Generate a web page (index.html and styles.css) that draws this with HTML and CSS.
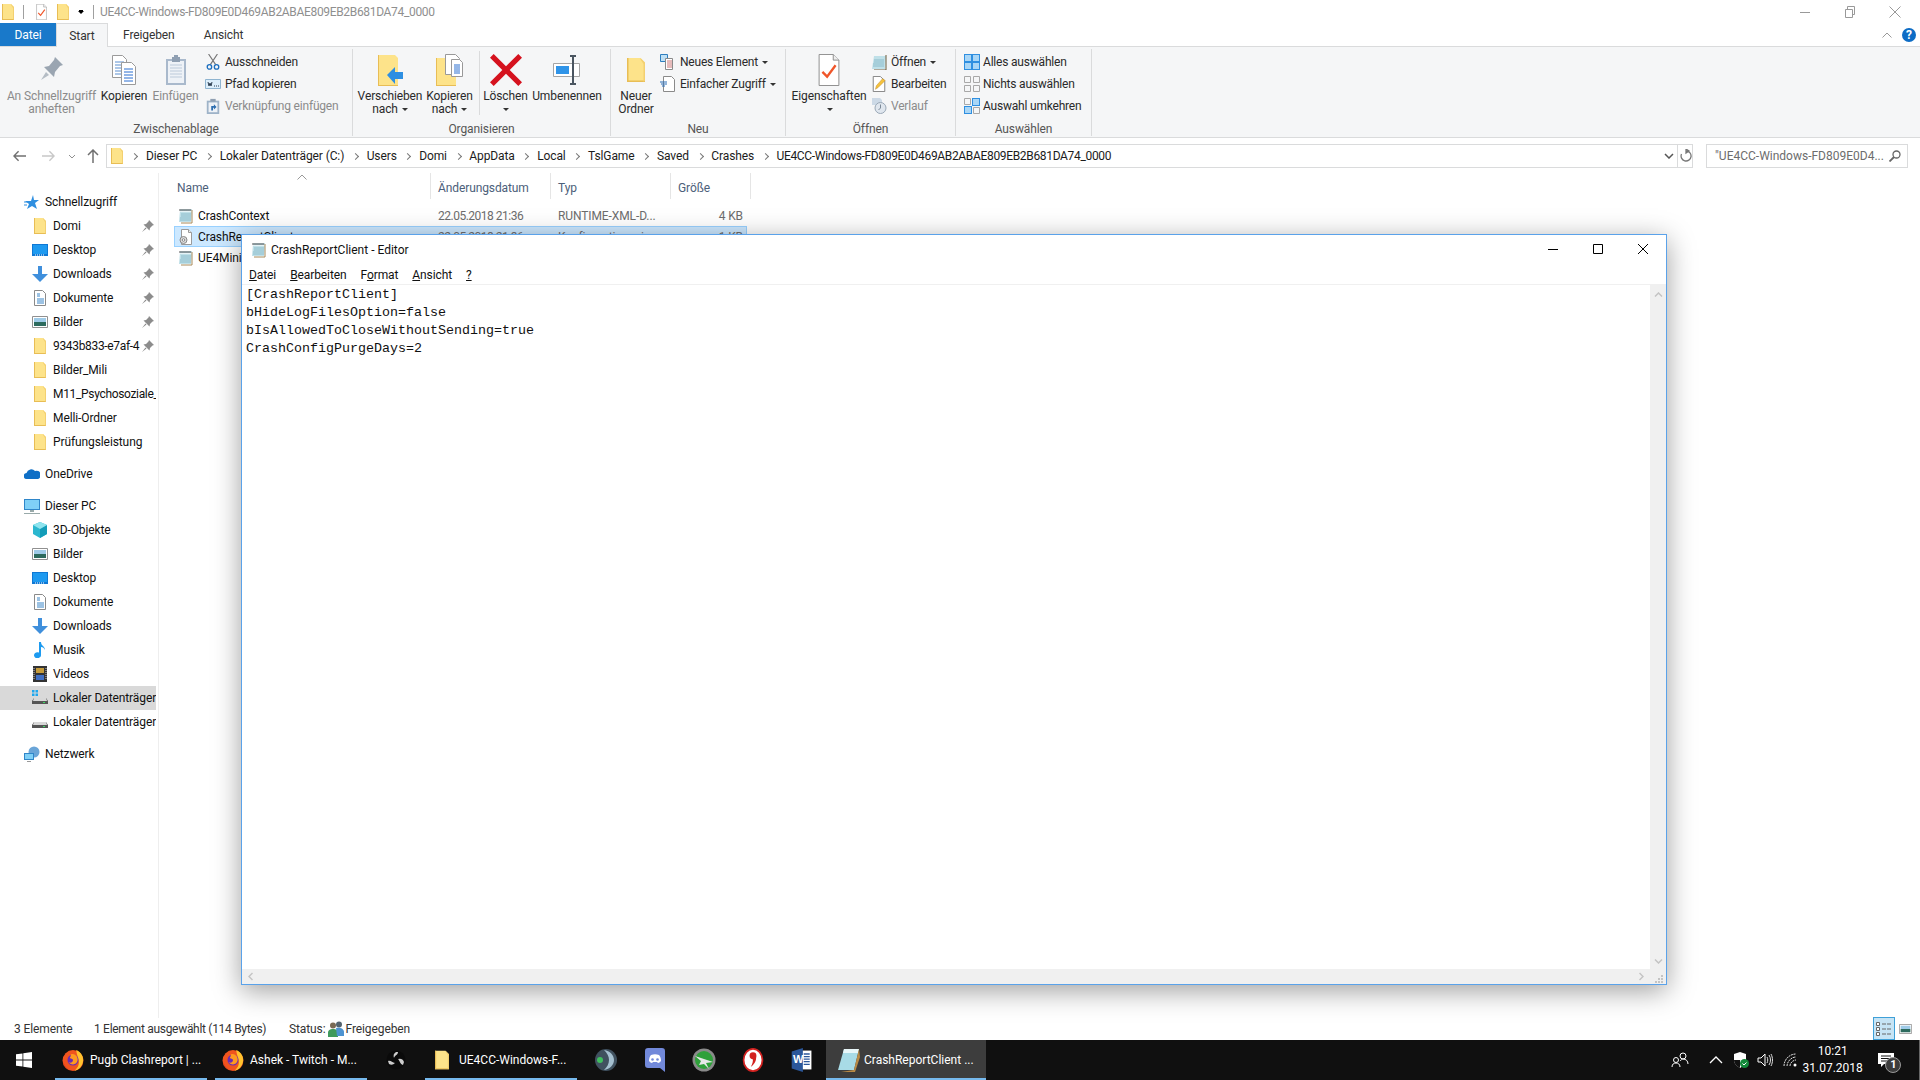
FILE: index.html
```html
<!DOCTYPE html>
<html lang="de">
<head>
<meta charset="UTF-8"/>
<title>CrashReportClient - Editor</title>
<link rel="stylesheet" href="styles.css">
</head>
<body>
<svg class="defs" aria-hidden="true">
	<symbol id="folder" viewBox="0 0 12 16"><path d="M0 0h9l3 3v13H0z" fill="#fde38a"/><path d="M0 0h1v15h11v1H0z" fill="#e8bd55"/><path d="M9 0l3 3v12l-1 1V4L9 1z" fill="#f3d070"/></symbol>
	<symbol id="note" viewBox="0 0 16 16"><path d="M2 2h12l-1 12H1z" fill="#bfe0e8"/><path d="M2 2h12v2H2z" fill="#e6f3f6"/><path d="M2 2h12M3 6h10M3 8h10M2 10h11M2 12h11" stroke="#8cbccb"/><path d="M14 2v13H3" fill="none" stroke="#a88a5a"/><path d="M2 1v2M4 1v2M6 1v2M8 1v2M10 1v2M12 1v2" stroke="#555"/></symbol>
	<symbol id="cfg" viewBox="0 0 16 16"><path d="M3.500.5h7l3 3v12h-10z" fill="#fff" stroke="#9a9a9a"/><path d="M10.500.5v3h3" fill="#eee" stroke="#9a9a9a"/><circle cx="5.500" cy="11" r="3.500" fill="#ddd" stroke="#888"/><circle cx="5.500" cy="11" r="1.300" fill="#fff" stroke="#888"/></symbol>
	<symbol id="pin" viewBox="0 0 12 12"><path d="M7 0l5 5-1.500.5L8 8l-.5 2.500L1.500 4.500 4 4l2.500-2.500zM3.500 7.500L0 12l4.500-3.500z" fill="#8c8c8c"/></symbol>
	<symbol id="star" viewBox="0 0 16 16"><path d="M9 1l1 5h5l-4 3 2 6-5-3-5 3 2-5-4-3h6z" fill="#2f8fe0"/><path d="M0 8h4M0 11h3" stroke="#2f8fe0"/></symbol>
	<symbol id="desk" viewBox="0 0 16 16"><path d="M0 2h16v12H0z" fill="#0f78d4"/><path d="M1 3h14v9H1z" fill="#1e9af0"/><path d="M3 13h10" stroke="#fff" stroke-dasharray="1 1"/></symbol>
	<symbol id="down" viewBox="0 0 16 16"><path d="M6 0h4v8h6l-8 8-8-8h6z" fill="#3f8fdc"/></symbol>
	<symbol id="docs" viewBox="0 0 16 16"><path d="M2.500.5h8l3 3v12h-11z" fill="#fff" stroke="#8a8a8a"/><path d="M5 4h3M5 6h3M5 9h7M5 11h7M5 13h7" stroke="#3a86c8"/></symbol>
	<symbol id="pics" viewBox="0 0 16 16"><path d="M.5 2.500h15v11H.5z" fill="#fff" stroke="#909090"/><path d="M2 4h12v4H2z" fill="#9fcbe8"/><path d="M2 8h12v4H2z" fill="#2d6b5e"/></symbol>
	<symbol id="cloud" viewBox="0 0 16 16"><path d="M3 13a3 3 0 0 1-.5-6A5 5 0 0 1 11 5a3.500 3.500 0 0 1 3 8z" fill="#0f6fc6"/></symbol>
	<symbol id="pc" viewBox="0 0 16 16"><path d="M0 1h16v11H0z" fill="#2f86c9"/><path d="M1 2h14v9H1z" fill="#7fd0f7"/><path d="M6 12h4v2H6zM0 15h16v1H0z" fill="#9aa"/></symbol>
	<symbol id="cube" viewBox="0 0 16 16"><path d="M8 0l7 3v9l-7 4-7-4V3z" fill="#2bb7cf"/><path d="M8 7l7-4v9l-7 4z" fill="#129cb8"/><path d="M8 0l7 3-7 4-7-4z" fill="#8fe4ee"/></symbol>
	<symbol id="music" viewBox="0 0 16 16"><path d="M7 0h2c0 4 4 4 4 8-1-2-2-3-4-3v8a3.500 3 0 1 1-2-2.500z" fill="#1d9bf0"/></symbol>
	<symbol id="film" viewBox="0 0 16 16"><path d="M1 0h14v16H1z" fill="#333"/><path d="M4 2h8v5H4z" fill="#c59b3a"/><path d="M4 9h8v5H4z" fill="#3f6fc4"/><path d="M2 2v12M14 2v12" stroke="#ccc" stroke-dasharray="1 1"/></symbol>
	<symbol id="drive" viewBox="0 0 16 16"><path d="M2 8h12l2 3v3H0v-3z" fill="#555"/><path d="M2 8h12l1 3H1z" fill="#d8d8d8"/><path d="M11 12h2v1h-2z" fill="#3ddc63"/></symbol>
	<symbol id="drivewin" viewBox="0 0 16 16"><use href="#drive"/><path d="M0 0h2.500v2.500H0zM3.500 0H6v2.500H3.500zM0 3.500h2.500V6H0zM3.500 3.500H6V6H3.500z" fill="#1ea7ef"/></symbol>
	<symbol id="net" viewBox="0 0 16 16"><circle cx="10" cy="6" r="5.500" fill="#6aa5d8"/><path d="M0 7h10v7H0z" fill="#2f86c9"/><path d="M1 8h8v5H1z" fill="#7fd0f7"/><path d="M3 15h4v1H3z" fill="#999"/></symbol>
	<symbol id="shared" viewBox="0 0 16 16"><circle cx="5" cy="4.500" r="3" fill="#7a6a55"/><path d="M0 16v-4c0-3 2-4 5-4s5 1 5 4v4z" fill="#3f9a5c"/><circle cx="11" cy="3.500" r="3" fill="#54636f"/><path d="M8 7c3-1 8 0 8 4v4H9z" fill="#4d93d1"/></symbol>
	<symbol id="bigpin" viewBox="0 0 24 32"><path d="M15 3l8 8-3 1-5 6-1 5-10-10 5-1 5-6z" fill="#9aa5b1"/><path d="M6 18L1 26l8-5z" fill="#b5bdc5"/></symbol>
	<symbol id="bigcopy" viewBox="0 0 26 32"><path d="M1.500 1.500h10l4 4v18h-14z" fill="#fff" stroke="#9a9a9a"/><path d="M4 8h9M4 11h9M4 14h9M4 17h9M4 20h9" stroke="#5a8fd0"/><path d="M10.500 8.500h10l4 4v18h-14z" fill="#fff" stroke="#9a9a9a"/><path d="M13 15h9M13 18h9M13 21h9M13 24h9M13 27h9" stroke="#2a6fd0"/></symbol>
	<symbol id="bigpaste" viewBox="0 0 22 32"><path d="M1 5h20v26H1z" fill="#a9b9cc"/><path d="M3 7h16v22H3z" fill="#eef2f7"/><path d="M5 11h12M5 14h12M5 17h12M5 20h12M5 23h12" stroke="#bccada"/><path d="M7 3h8v5H7z" fill="#8f9fb2"/><path d="M9 1h4v3H9z" fill="#8f9fb2"/></symbol>
	<symbol id="bigmove" viewBox="0 0 28 32"><path d="M2 1h17l3 3v28H2z" fill="#fde38a"/><path d="M2 1h1v30h19v1H2z" fill="#e8bd55"/><path d="M11 21l8-8v5h8v7h-8v5z" fill="#2e8fe2"/></symbol>
	<symbol id="bigcopyto" viewBox="0 0 28 32"><path d="M0 4h20v28H0z" fill="#fde38a"/><path d="M0 4h1v27h19v1H0z" fill="#e8bd55"/><path d="M9.500.5h10l4 4v16h-14z" fill="#fff" stroke="#999"/><path d="M15.500 5.500h8l3 3v14h-11z" fill="#fff" stroke="#999"/><path d="M18 11h6M18 13h6M18 15h6M18 17h6M18 19h6" stroke="#2a6fd0"/></symbol>
	<symbol id="bigx" viewBox="0 0 26 26"><path d="M3 0l10 10L23 0l3 3-10 10 10 10-3 3-10-10L3 26l-3-3 10-10L0 3z" fill="#d5121e"/></symbol>
	<symbol id="bigname" viewBox="0 0 28 32"><path d="M.5 9.500h26v13H.5z" fill="#fff" stroke="#a5a5a5"/><path d="M3 12h13v8H3z" fill="#2f94e8"/><path d="M17 2h6M17 30h6M20 2v28" stroke="#4a5560" stroke-width="2"/></symbol>
	<symbol id="bigcheck" viewBox="0 0 22 34"><path d="M.5.500h15l6 6v27H.5z" fill="#fff" stroke="#8a8a8a"/><path d="M15.500.500v6h6" fill="#eee" stroke="#8a8a8a"/><path d="M4 19l5 5L18 12" fill="none" stroke="#f0562a" stroke-width="2.500"/></symbol>
	<symbol id="cut" viewBox="0 0 14 18"><path d="M2 0l8 12M12 0L4 12" stroke="#777" stroke-width="1.300"/><circle cx="3" cy="14.500" r="2.500" fill="none" stroke="#1d6fbf" stroke-width="1.500"/><circle cx="11" cy="14.500" r="2.500" fill="none" stroke="#1d6fbf" stroke-width="1.500"/></symbol>
	<symbol id="path" viewBox="0 0 16 12"><path d="M.5 1.500h15v9H.5z" fill="#dceefb" stroke="#8fb4d0"/><path d="M3 4l1 4 1-3 1 3 1-4M9 8h1M11 8h1M13 8h1" fill="none" stroke="#2d3f52"/></symbol>
	<symbol id="link" viewBox="0 0 14 18"><path d="M0 3h14v15H0z" fill="#9eb3c8"/><path d="M2 5h10v11H2z" fill="#eef2f7"/><path d="M4 1h6v3H4z" fill="#8f9fb2"/><path d="M5 14V9h3V7l3 3-3 3v-2H7v3z" fill="#2e6fb0"/></symbol>
	<symbol id="newitem" viewBox="0 0 16 16"><path d="M.5.500h7v7h-7z" fill="#bfe0f5" stroke="#2f7fbf"/><path d="M5.500 4.500h7v11h-7z" fill="#fff" stroke="#8a8a8a"/><path d="M7 7h5M7 9h5M7 11h5M7 13h5" stroke="#c77"/></symbol>
	<symbol id="easy" viewBox="0 0 16 16"><path d="M3.500.5h8l3 3v12h-11z" fill="#fff" stroke="#8a8a8a"/><path d="M0 6h7M1 8h6M2 10h3" stroke="#2a6fb8"/></symbol>
	<symbol id="open" viewBox="0 0 16 16"><path d="M3 2h12l-1 13H1z" fill="#bfe0e8"/><path d="M3 6h10M3 8h10M2 10h11M2 12h11" stroke="#8cbccb"/><path d="M15 1v15H3" fill="none" stroke="#6b5a3a"/></symbol>
	<symbol id="edit" viewBox="0 0 14 18"><path d="M.5.500h8l5 5v12H.5z" fill="#fff" stroke="#777"/><path d="M3 15l1-4 7-8 3 2-8 8z" fill="#f5c23c" stroke="#b8862a" stroke-width=".5"/></symbol>
	<symbol id="hist" viewBox="0 0 16 16"><path d="M1 0h8l2 2v5H1z" fill="#ccd9e6"/><circle cx="9.500" cy="10" r="5.500" fill="#dfe6ee" stroke="#9aa8b6"/><path d="M9.500 6.500V10l-2 2" fill="none" stroke="#7c8a98"/></symbol>
	<symbol id="selall" viewBox="0 0 16 16"><path d="M0 0h16v16H0z" fill="#2f8fe0"/><path d="M1 1h6v6H1zM9 1h6v6H9zM1 9h6v6H1zM9 9h6v6H9z" fill="#a9d6f6"/></symbol>
	<symbol id="selnone" viewBox="0 0 16 16"><path d="M.5.500h6v6h-6zM9.500.5h6v6h-6zM.5 9.500h6v6h-6zM9.500 9.500h6v6h-6z" fill="none" stroke="#a8a8a8"/></symbol>
	<symbol id="selinv" viewBox="0 0 16 16"><path d="M8 0h8v8H8zM0 8h8v8H0z" fill="#2f8fe0"/><path d="M9 1h6v6H9zM1 9h6v6H1z" fill="#a9d6f6"/><path d="M.5.500h6v6h-6zM9.500 9.500h6v6h-6z" fill="none" stroke="#a8a8a8"/></symbol>
	<symbol id="fox" viewBox="0 0 20 20"><circle cx="10" cy="10.500" r="9.500" fill="#f0541e"/><path d="M13 1c5 2 7 7 6 11-1 4-4 7-8 8 4-3 5-7 4-10-.5-3-2-6-2-9z" fill="#ffc22e"/><circle cx="10" cy="10" r="5" fill="#6a2bb5"/><path d="M8 5c2-1 5 0 6 3 1 3-1 6-4 6-2 0-3-1-4-2 2 1 4 0 4-2 0-1-2-1-3-2 1-1 1-2 1-3z" fill="#ff9a1f"/><path d="M1 12c1 4 5 8 10 8-4 0-7-2-10-8z" fill="#e2261d"/></symbol>
	<symbol id="obs" viewBox="0 0 20 20"><circle cx="10" cy="10" r="9.500" fill="#0a0a0a"/><path d="M10 2a5 5 0 0 0-2 6c1-3 4-3 4-6zM18 12a5 5 0 0 0-6-3c2 2 2 5 5 6zM3 14a5 5 0 0 0 6-1c-3 0-4-3-7-2z" fill="#ccc"/></symbol>
	<symbol id="ts" viewBox="0 0 24 24"><circle cx="12" cy="12" r="11" fill="#40515f"/><path d="M10 2c6 1 10 5 10 10s-4 9-10 10c3-3 5-6 5-10S13 5 10 2z" fill="#a5c0d0"/><circle cx="6" cy="12" r="3" fill="#3fbf5f"/></symbol>
	<symbol id="disc" viewBox="0 0 20 24"><path d="M3 0h14a3 3 0 0 1 3 3v21l-5-4H3a3 3 0 0 1-3-3V3a3 3 0 0 1 3-3z" fill="#7289da"/><path d="M4 13c0-3 1-5 2-6 3-1 5-1 8 0 1 1 2 3 2 6-1 1-2 2-3 2l-1-1H8l-1 1c-1 0-2-1-3-2z" fill="#fff"/><circle cx="7.500" cy="11.500" r="1.300" fill="#7289da"/><circle cx="12.500" cy="11.500" r="1.300" fill="#7289da"/></symbol>
	<symbol id="xp" viewBox="0 0 24 24"><circle cx="12" cy="12" r="11.500" fill="#8a8a8a"/><circle cx="12" cy="12" r="9" fill="#2fa03a"/><path d="M3 8l18 6-7 1 3 6-5-5-5 1 2-4z" fill="#e8e8e8"/></symbol>
	<symbol id="comma" viewBox="0 0 24 28"><ellipse cx="12" cy="14" rx="11" ry="13" fill="#fff" stroke="#d3211f" stroke-width="2"/><circle cx="12" cy="9" r="4" fill="#d3211f"/><path d="M15.500 9c1 6-2 10-6 13 2-4 3-7 2-10z" fill="#d3211f"/></symbol>
	<symbol id="padbig" viewBox="0 0 24 24"><path d="M7 1h15l-5 21H1z" fill="#a8dbe6"/><path d="M7 1h15l-1 4H6z" fill="#e8f6f8"/><path d="M22 1l1 8-5 15H4l13-2z" fill="#b98a45"/></symbol>
</svg>

<div class="explorer">
	<header class="titlebar">
		<div class="qat">
			<svg class="i12"><use href="#folder"/></svg>
			<span class="qat-sep"></span>
			<svg class="i14"><use href="#bigcheck"/></svg>
			<svg class="i12"><use href="#folder"/></svg>
			<span class="qat-drop"></span>
			<span class="qat-sep"></span>
		</div>
		<span class="title tight">UE4CC-Windows-FD809E0D469AB2ABAE809EB2B681DA74_0000</span>
		<div class="winbtns">
			<svg viewBox="0 0 12 12"><path d="M1 6.500h10" stroke="#999"/></svg>
			<svg viewBox="0 0 12 12"><path d="M1.500 3.500h7v8h-7zM3.500 3.500v-3h7v8h-2" fill="none" stroke="#999"/></svg>
			<svg viewBox="0 0 12 12"><path d="M.5.500l11 11M11.500.5l-11 11" stroke="#999"/></svg>
		</div>
	</header>

	<nav class="tabs">
		<span class="tab tab-file">Datei</span>
		<span class="tab tab-active">Start</span>
		<span class="tab tab-free">Freigeben</span>
		<span class="tab tab-view">Ansicht</span>
		<svg class="collapse" viewBox="0 0 10 6"><path d="M.5 5.500L5 1l4.500 4.500" fill="none" stroke="#999"/></svg>
		<span class="help">?</span>
	</nav>

	<section class="ribbon">
		<div class="group g-clip">
			<div class="group-body">
				<div class="big w-pin off"><svg class="bigicon"><use href="#bigpin"/></svg><span>An Schnellzugriff<br/>anheften</span></div>
				<div class="big w-copy"><svg class="bigicon"><use href="#bigcopy"/></svg><span>Kopieren</span></div>
				<div class="big w-paste off"><svg class="bigicon"><use href="#bigpaste"/></svg><span>Einfügen</span></div>
				<ul class="small">
					<li><svg class="i16"><use href="#cut"/></svg>Ausschneiden</li>
					<li><svg class="i16"><use href="#path"/></svg>Pfad kopieren</li>
					<li class="off"><svg class="i16"><use href="#link"/></svg>Verknüpfung einfügen</li>
				</ul>
			</div>
			<div class="group-label">Zwischenablage</div>
		</div>
		<div class="group g-org">
			<div class="group-body">
				<div class="big w-move"><svg class="bigicon"><use href="#bigmove"/></svg><span>Verschieben<br/>nach <i class="caret"></i></span></div>
				<div class="big w-copyto"><svg class="bigicon"><use href="#bigcopyto"/></svg><span>Kopieren<br/>nach <i class="caret"></i></span></div>
				<div class="big w-del"><svg class="bigicon"><use href="#bigx"/></svg><span>Löschen<br/><i class="caret"></i></span></div>
				<div class="big w-ren"><svg class="bigicon"><use href="#bigname"/></svg><span>Umbenennen</span></div>
			</div>
			<div class="group-label">Organisieren</div>
		</div>
		<div class="group g-new">
			<div class="group-body">
				<div class="big w-folder"><svg class="foldericon"><use href="#folder"/></svg><span>Neuer<br/>Ordner</span></div>
				<ul class="small">
					<li><svg class="i16"><use href="#newitem"/></svg>Neues Element <i class="caret"></i></li>
					<li><svg class="i16"><use href="#easy"/></svg>Einfacher Zugriff <i class="caret"></i></li>
				</ul>
			</div>
			<div class="group-label">Neu</div>
		</div>
		<div class="group g-open">
			<div class="group-body">
				<div class="big w-props"><svg class="bigicon"><use href="#bigcheck"/></svg><span>Eigenschaften<br/><i class="caret"></i></span></div>
				<ul class="small">
					<li><svg class="i16"><use href="#open"/></svg>Öffnen <i class="caret"></i></li>
					<li><svg class="i16"><use href="#edit"/></svg>Bearbeiten</li>
					<li class="off"><svg class="i16"><use href="#hist"/></svg>Verlauf</li>
				</ul>
			</div>
			<div class="group-label">Öffnen</div>
		</div>
		<div class="group g-sel">
			<div class="group-body">
				<ul class="small">
					<li><svg class="i16"><use href="#selall"/></svg>Alles auswählen</li>
					<li><svg class="i16"><use href="#selnone"/></svg>Nichts auswählen</li>
					<li><svg class="i16"><use href="#selinv"/></svg>Auswahl umkehren</li>
				</ul>
			</div>
			<div class="group-label">Auswählen</div>
		</div>
	</section>

	<div class="addressrow">
		<div class="navbtns">
			<svg viewBox="0 0 14 12"><path d="M6 1L1 6l5 5M1 6h13" fill="none" stroke="#707070" stroke-width="1.500"/></svg>
			<svg viewBox="0 0 14 12"><path d="M8 1l5 5-5 5M13 6H0" fill="none" stroke="#c8c8c8" stroke-width="1.500"/></svg>
			<svg class="navdrop" viewBox="0 0 8 5"><path d="M1 1l3 3 3-3" fill="none" stroke="#909090"/></svg>
			<svg viewBox="0 0 12 14"><path d="M1 6l5-5 5 5M6 1v13" fill="none" stroke="#707070" stroke-width="1.500"/></svg>
		</div>
		<div class="address">
			<svg class="i12 addr-folder"><use href="#folder"/></svg>
			<i class="sep"></i><span>Dieser PC</span>
			<i class="sep"></i><span>Lokaler Datenträger (C:)</span>
			<i class="sep"></i><span>Users</span>
			<i class="sep"></i><span>Domi</span>
			<i class="sep"></i><span>AppData</span>
			<i class="sep"></i><span>Local</span>
			<i class="sep"></i><span>TslGame</span>
			<i class="sep"></i><span>Saved</span>
			<i class="sep"></i><span>Crashes</span>
			<i class="sep"></i><span class="tight">UE4CC-Windows-FD809E0D469AB2ABAE809EB2B681DA74_0000</span>
			<svg class="addr-drop" viewBox="0 0 10 6"><path d="M1 1l4 4 4-4" fill="none" stroke="#555" stroke-width="1.500"/></svg>
			<span class="addr-refresh"><svg viewBox="0 0 12 14"><path d="M6 2a5 5 0 1 1-4.500 3M6 0v4l3-2z" fill="none" stroke="#777" stroke-width="1.300"/></svg></span>
		</div>
		<div class="search">
			<span>"UE4CC-Windows-FD809E0D4...</span>
			<svg viewBox="0 0 12 12"><circle cx="7.500" cy="4.500" r="3.500" fill="none" stroke="#666" stroke-width="1.300"/><path d="M5 7l-4.500 4.500" stroke="#666" stroke-width="1.800"/></svg>
		</div>
	</div>

	<main class="main">
		<aside class="sidebar">
			<ul class="tree">
				<li class="top"><svg class="i16"><use href="#star"/></svg><span>Schnellzugriff</span></li>
				<li><svg class="i16"><use href="#folder"/></svg><span>Domi</span><svg class="pin"><use href="#pin"/></svg></li>
				<li><svg class="i16"><use href="#desk"/></svg><span>Desktop</span><svg class="pin"><use href="#pin"/></svg></li>
				<li><svg class="i16"><use href="#down"/></svg><span>Downloads</span><svg class="pin"><use href="#pin"/></svg></li>
				<li><svg class="i16"><use href="#docs"/></svg><span>Dokumente</span><svg class="pin"><use href="#pin"/></svg></li>
				<li><svg class="i16"><use href="#pics"/></svg><span>Bilder</span><svg class="pin"><use href="#pin"/></svg></li>
				<li><svg class="i16"><use href="#folder"/></svg><span class="tight">9343b833-e7af-4</span><svg class="pin"><use href="#pin"/></svg></li>
				<li><svg class="i16"><use href="#folder"/></svg><span>Bilder_Mili</span></li>
				<li><svg class="i16"><use href="#folder"/></svg><span class="tight">M11_Psychosoziale_</span></li>
				<li><svg class="i16"><use href="#folder"/></svg><span>Melli-Ordner</span></li>
				<li><svg class="i16"><use href="#folder"/></svg><span>Prüfungsleistung</span></li>
			</ul>
			<ul class="tree">
				<li class="top"><svg class="i16"><use href="#cloud"/></svg><span>OneDrive</span></li>
			</ul>
			<ul class="tree">
				<li class="top"><svg class="i16"><use href="#pc"/></svg><span>Dieser PC</span></li>
				<li><svg class="i16"><use href="#cube"/></svg><span>3D-Objekte</span></li>
				<li><svg class="i16"><use href="#pics"/></svg><span>Bilder</span></li>
				<li><svg class="i16"><use href="#desk"/></svg><span>Desktop</span></li>
				<li><svg class="i16"><use href="#docs"/></svg><span>Dokumente</span></li>
				<li><svg class="i16"><use href="#down"/></svg><span>Downloads</span></li>
				<li><svg class="i16"><use href="#music"/></svg><span>Musik</span></li>
				<li><svg class="i16"><use href="#film"/></svg><span>Videos</span></li>
				<li class="current"><svg class="i16"><use href="#drivewin"/></svg><span>Lokaler Datenträger</span></li>
				<li><svg class="i16"><use href="#drive"/></svg><span>Lokaler Datenträger</span></li>
			</ul>
			<ul class="tree">
				<li class="top"><svg class="i16"><use href="#net"/></svg><span>Netzwerk</span></li>
			</ul>
		</aside>
		<section class="files">
			<div class="filehead">
				<span class="cell">Name<svg class="sortcaret" viewBox="0 0 10 6"><path d="M.5 5.500L5 1l4.500 4.500" fill="none" stroke="#999"/></svg></span>
				<span class="cell">Änderungsdatum</span>
				<span class="cell">Typ</span>
				<span class="cell">Größe</span>
			</div>
			<div class="filerow">
				<span class="cell name"><svg class="i16"><use href="#note"/></svg>CrashContext</span>
				<span class="cell dim date">22.05.2018 21:36</span>
				<span class="cell dim">RUNTIME-XML-D...</span>
				<span class="cell dim right">4 KB</span>
			</div>
			<div class="filerow selected">
				<span class="cell name"><svg class="i16"><use href="#cfg"/></svg>CrashReportClient</span>
				<span class="cell dim date">22.05.2018 21:36</span>
				<span class="cell dim">Konfigurationsein...</span>
				<span class="cell dim right">1 KB</span>
			</div>
			<div class="filerow">
				<span class="cell name"><svg class="i16"><use href="#note"/></svg>UE4Minidump</span>
				<span class="cell dim date">22.05.2018 21:36</span>
				<span class="cell dim">Textdokument</span>
				<span class="cell dim right">1 KB</span>
			</div>
		</section>
	</main>

	<footer class="statusbar">
		<span class="st st-count">3 Elemente</span>
		<span class="st st-sel">1 Element ausgewählt (114 Bytes)</span>
		<span class="st st-share">Status: <svg class="i16"><use href="#shared"/></svg> Freigegeben</span>
		<div class="views">
			<span class="view-details"><svg viewBox="0 0 16 14"><path d="M.5.500h3v3h-3zM.5 5.500h3v3h-3zM.5 10.500h3v3h-3z" fill="#fff" stroke="#666"/><path d="M6 2h4M11 2h4M6 7h4M11 7h4M6 12h4M11 12h4" stroke="#666"/></svg></span>
			<svg class="i14"><use href="#pics"/></svg>
		</div>
	</footer>
</div>

<div class="taskbar">
	<span class="startbtn"><svg viewBox="0 0 16 16"><path d="M0 2.300l6.500-.9v6.200H0zM7.300 1.300L16 0v7.600H7.300zM0 8.400h6.500v6.200L0 13.700zM7.300 8.400H16V16l-8.700-1.200z" fill="#fff"/></svg></span>
	<span class="taskwin tw-first"><svg class="i22"><use href="#fox"/></svg>Pugb Clashreport | ...</span>
	<span class="taskwin"><svg class="i22"><use href="#fox"/></svg>Ashek - Twitch - M...</span>
	<span class="taskapp tw-obs"><svg class="i20"><use href="#obs"/></svg></span>
	<span class="taskwin tw-explorer"><svg class="tw-folder"><use href="#folder"/></svg>UE4CC-Windows-F...</span>
	<span class="taskapp tw-ts"><svg class="i24"><use href="#ts"/></svg></span>
	<span class="taskapp"><svg class="i24"><use href="#disc"/></svg></span>
	<span class="taskapp"><svg class="i24"><use href="#xp"/></svg></span>
	<span class="taskapp"><svg class="i24"><use href="#comma"/></svg></span>
	<span class="taskapp"><svg class="i24" viewBox="0 0 24 28"><path d="M9 3h14v22H9z" fill="#fff"/><path d="M14 7h7M14 10h7M14 13h7M14 16h7M14 19h7" stroke="#2b579a" stroke-width="1.500"/><path d="M0 4l13-4v28L0 24z" fill="#2b579a"/><text x="1.500" y="18" class="wordmark">W</text></svg></span>
	<span class="taskwin active"><svg class="i24"><use href="#padbig"/></svg>CrashReportClient ...</span>
	<div class="tray">
		<svg class="t-people" viewBox="0 0 18 18"><circle cx="12" cy="5" r="3" fill="none" stroke="#fff"/><circle cx="5" cy="9" r="2.500" fill="none" stroke="#fff"/><path d="M1 16c0-3 2-4 4-4s4 1 4 4M9 10c1-1 2-2 3-2 3 0 5 2 5 5" fill="none" stroke="#fff"/></svg>
		<svg class="t-chev" viewBox="0 0 14 8"><path d="M1 7l6-6 6 6" fill="none" stroke="#fff" stroke-width="1.300"/></svg>
		<svg class="t-shield" viewBox="0 0 16 16"><path d="M7 0l6 2v6c0 4-3 6-6 8-3-2-6-4-6-8V2z" fill="#fff"/><path d="M7 0v16C4 14 1 12 1 8h6z" fill="#111"/><circle cx="11.500" cy="11.500" r="4.500" fill="#128a3a"/><path d="M9.500 11.500l1.500 1.500 2.500-2.500" fill="none" stroke="#fff"/></svg>
		<svg class="t-vol" viewBox="0 0 16 14"><path d="M1 5h3l4-4v12L4 9H1z" fill="none" stroke="#fff"/><path d="M10 4c1 2 1 4 0 6M12 2c2 3 2 7 0 10M14 1c2 4 2 8 0 12" fill="none" stroke="#ddd"/></svg>
		<svg class="t-net" viewBox="0 0 16 14"><path d="M1 13c0-6 5-12 12-12M4 13c0-4 4-9 9-9M7 13c0-3 3-6 6-6" fill="none" stroke="#ddd" stroke-dasharray="2 .7"/><circle cx="12" cy="12" r="1.500" fill="#fff"/></svg>
		<div class="clock"><span>10:21</span><span>31.07.2018</span></div>
		<span class="notif"><svg viewBox="0 0 16 14"><path d="M0 0h16v11H6l-3 3v-3H0z" fill="#fff"/><path d="M3 3h10M3 5.500h10M3 8h7" stroke="#111"/></svg><b class="badge">1</b></span>
		<span class="showdesk"></span>
	</div>
</div>

<article class="notepad">
	<div class="np-title">
		<svg class="i16"><use href="#note"/></svg>
		<span>CrashReportClient - Editor</span>
		<div class="np-btns">
			<svg viewBox="0 0 12 12"><path d="M1 6.500h10" stroke="#000"/></svg>
			<svg viewBox="0 0 12 12"><path d="M1.500 1.500h9v9h-9z" fill="none" stroke="#000"/></svg>
			<svg viewBox="0 0 12 12"><path d="M1 1l10 10M11 1L1 11" stroke="#000"/></svg>
		</div>
	</div>
	<div class="np-menu">
		<span><u>D</u>atei</span>
		<span><u>B</u>earbeiten</span>
		<span>F<u>o</u>rmat</span>
		<span><u>A</u>nsicht</span>
		<span><u>?</u></span>
	</div>
	<div class="np-body">
		<pre class="np-text">[CrashReportClient]
bHideLogFilesOption=false
bIsAllowedToCloseWithoutSending=true
CrashConfigPurgeDays=2</pre>
		<div class="vscroll">
			<svg viewBox="0 0 9 5"><path d="M1 4.500L4.500 1 8 4.500" fill="none" stroke="#c4c4c4" stroke-width="1.500"/></svg>
			<svg viewBox="0 0 9 5"><path d="M1 .5L4.500 4 8 .5" fill="none" stroke="#c4c4c4" stroke-width="1.500"/></svg>
		</div>
	</div>
	<div class="hscroll">
		<svg viewBox="0 0 5 9"><path d="M4.500 1L1 4.500 4.500 8" fill="none" stroke="#c4c4c4" stroke-width="1.500"/></svg>
		<svg viewBox="0 0 5 9"><path d="M.5 1L4 4.500.5 8" fill="none" stroke="#c4c4c4" stroke-width="1.500"/></svg>
		<svg class="grip" viewBox="0 0 8 8"><path d="M6 0h2v2H6zM3 3h2v2H3zM6 3h2v2H6zM0 6h2v2H0zM3 6h2v2H3zM6 6h2v2H6z" fill="#c4c4c4"/></svg>
	</div>
</article>
</body>
</html>
```
FILE: styles.css
```css
html, body { margin: 0; height: 100%; overflow: hidden; }
body {
	display: flex; flex-direction: column;
	width: 1920px; height: 1080px; position: relative;
	background: #fff; color: #1c1c1c;
	font-family: Roboto, 'Liberation Sans', sans-serif; font-size: 12px;
	letter-spacing: -0.1px;
}
ul { list-style: none; margin: 0; padding: 0; }
svg { display: block; flex: none; overflow: hidden; }
.defs { position: absolute; width: 0; height: 0; }
.i12 { width: 12px; height: 16px; }
.i14 { width: 13px; height: 16px; }
.i16 { width: 16px; height: 16px; }
.i20 { width: 20px; height: 20px; }
.i22 { width: 22px; height: 22px; }
.i24 { width: 24px; height: 24px; }
.tight { letter-spacing: -0.33px; }

.explorer { flex: 1; display: flex; flex-direction: column; min-height: 0; }

/* title bar */
.titlebar { height: 23px; display: flex; align-items: center; padding-top: 1px; box-sizing: border-box; }
.qat { display: flex; align-items: center; padding-left: 2px; width: 100px; box-sizing: border-box; }
.qat-sep { width: 1px; height: 14px; background: #a0a0a0; margin: 0 11px 0 9px; }
.qat .i14 { margin-right: 9px; }
.qat-drop { width: 0; height: 0; margin-left: 9px; border: 3px solid transparent; border-top-color: #000; border-bottom-width: 0; box-shadow: 0 -2px 0 -1px #000; }
.qat-drop + .qat-sep { margin: 0 0 0 9px; }
.title { color: #8f8f8f; }
.winbtns { margin-left: auto; display: flex; gap: 33px; padding-right: 19px; }
.winbtns svg { width: 12px; height: 12px; }

/* tabs */
.tabs { height: 23px; display: flex; align-items: center; position: relative; border-bottom: 1px solid #dadbdc; margin-bottom: -1px; }
.tab { height: 23px; line-height: 25px; text-align: center; color: #333; box-sizing: border-box; }
.tab-file { width: 56px; background: #1979ca; color: #fff; }
.tab-active { width: 52px; background: #f5f6f7; border: 1px solid #dadbdc; border-bottom: 0; height: 24px; position: relative; }
.tab-free { margin-left: 15px; }
.tab-view { margin-left: 29px; }
.collapse { width: 10px; height: 6px; margin-left: auto; margin-right: 10px; }
.help { width: 14px; height: 14px; margin-right: 4px; border-radius: 50%; background: #0d6cc5; color: #fff; font-weight: 700; text-align: center; line-height: 14px; }

/* ribbon */
.ribbon { height: 92px; box-sizing: border-box; background: #f5f6f7; border-bottom: 1px solid #dadbdc; display: flex; padding-top: 3px; color: #2a2a2a; }
.group { height: 87px; box-sizing: border-box; border-right: 1px solid #dadbdc; display: flex; flex-direction: column; }
.group-body { height: 73px; display: flex; padding-top: 2px; box-sizing: border-box; }
.group-label { height: 14px; line-height: 14px; text-align: center; color: #555; }
.g-clip { width: 353px; }
.g-clip .group-body { padding-left: 7px; }
.g-org { width: 258px; }
.g-org .group-body { padding-left: 7px; }
.g-new { width: 175px; }
.g-new .group-body { padding-left: 3px; }
.g-open { width: 170px; }
.g-open .group-body { padding-left: 4px; }
.g-sel { width: 136px; }
.g-sel .group-body { padding-left: 8px; }

.big { display: flex; flex-direction: column; align-items: center; text-align: center; line-height: 13px; padding-top: 3px; box-sizing: border-box; white-space: nowrap; }
.bigicon { width: 32px; height: 32px; margin-bottom: 4px; }
.foldericon { width: 18px; height: 24px; margin: 4px 0 8px; }
.w-pin { width: 89px; }
.w-copy { width: 56px; }
.w-paste { width: 47px; }
.w-move { width: 60px; }
.w-copyto { width: 60px; height: 64px; margin-right: 2px; border-right: 1px solid #dadbdc; }
.w-del { width: 47px; }
.w-ren { width: 76px; }
.w-folder { width: 44px; }
.w-props { width: 78px; }
.off { color: #8b8b8b; }
.caret { display: inline-block; width: 0; height: 0; border: 3px solid transparent; border-top-color: #333; border-bottom-width: 0; vertical-align: 2px; margin-left: 1px; }
.small { margin-left: 6px; letter-spacing: -0.2px; }
.small li { height: 22px; display: flex; align-items: center; gap: 4px; white-space: nowrap; }
.small .caret { margin-left: 0; }
.g-new .small { margin-left: 2px; }
.g-open .small { margin-left: 3px; }
.g-sel .small { margin-left: 0; }
.g-sel .small li { gap: 3px; }

/* address */
.addressrow { height: 35px; display: flex; align-items: center; padding-top: 1px; box-sizing: border-box; }
.navbtns { width: 106px; display: flex; align-items: center; padding-left: 13px; box-sizing: border-box; gap: 16px; }
.navbtns svg { width: 13px; height: 12px; }
.navbtns .navdrop { width: 8px; height: 5px; margin: 0 -5px 0 -3px; }
.navbtns svg:last-child { width: 12px; height: 14px; }
.address { width: 1587px; height: 24px; box-sizing: border-box; border: 1px solid #dadbdc; display: flex; align-items: center; white-space: nowrap; }
.addr-folder { margin-left: 4px; }
.sep { width: 22.4px; flex: none; display: flex; justify-content: center; align-items: center; }
.addr-folder + .sep { width: 23px; }
.sep::before { content: ''; width: 4px; height: 4px; border: solid #777; border-width: 1px 1px 0 0; transform: rotate(45deg); }
.addr-drop { width: 10px; height: 6px; margin-left: auto; }
.addr-refresh { height: 22px; width: 15px; margin-left: 3px; box-sizing: border-box; border-left: 1px solid #dadbdc; display: flex; align-items: center; justify-content: flex-end; }
.addr-refresh svg { width: 12px; height: 14px; }
.search { width: 202px; height: 24px; margin-left: 13px; box-sizing: border-box; border: 1px solid #dadbdc; display: flex; align-items: center; padding-left: 8px; color: #6d6d6d; white-space: nowrap; letter-spacing: 0; }
.search svg { width: 12px; height: 12px; margin-left: 5px; }

/* main */
.main { flex: 1; display: flex; min-height: 0; background: linear-gradient(#eee, #eee) 158px 0 / 1px 100% no-repeat #fff; }
.sidebar { width: 156px; margin-right: 2px; padding-top: 17px; flex: none; overflow: hidden; }
.tree { margin-bottom: 8px; }
.tree li { height: 24px; display: flex; align-items: center; gap: 5px; padding-left: 32px; white-space: nowrap; position: relative; color: #111; }
.tree li.top { padding-left: 24px; }
.tree .current { background: #d9d9d9; }
.tree .pin { position: absolute; left: 142px; top: 6px; width: 12px; height: 12px; }
.files { padding-left: 16px; flex: 1; }
.filehead { display: grid; grid-template-columns: 257px 120px 120px 80px; width: 577px; height: 32px; color: #4c607a; }
.filehead .cell { height: 26px; line-height: 30px; padding-left: 7px; border-right: 1px solid #e5e5e5; box-sizing: border-box; display: flex; }
.filehead .cell:first-child { padding-left: 3px; }
.sortcaret { width: 10px; height: 6px; margin: 1px 0 0 88px; }
.filerow { display: grid; grid-template-columns: 257px 120px 120px 76px; width: 573px; height: 21px; align-items: center; }
.filerow .cell { padding-left: 7px; white-space: nowrap; }
.filerow .name { padding-left: 4px; display: flex; align-items: center; gap: 4px; color: #111; }
.filerow .dim { color: #6d6d6d; }
.filerow .date { letter-spacing: -0.5px; }
.filerow .right { text-align: right; padding-right: 4px; }
.selected { background: #cce8ff; outline: 1px solid #99d1ff; outline-offset: -1px; }

/* status */
.statusbar { height: 22px; display: flex; align-items: center; color: #333; }
.st { display: flex; align-items: center; gap: 2px; white-space: nowrap; }
.st-count { margin-left: 14px; width: 80px; }
.st-sel { width: 195px; letter-spacing: -0.3px; }
.st-share { width: 140px; }
.views { margin-left: auto; display: flex; align-items: center; gap: 4px; padding-right: 8px; align-self: flex-end; }
.view-details { width: 22px; height: 23px; box-sizing: border-box; border: 1px solid #3fa0d8; background: #c6e4f5; display: flex; align-items: center; justify-content: center; }
.view-details svg { width: 16px; height: 14px; }

/* taskbar */
.taskbar { height: 40px; background: #101010; color: #fff; display: flex; flex: none; letter-spacing: 0; }
.startbtn { width: 48px; display: flex; align-items: center; justify-content: center; }
.startbtn svg { width: 16px; height: 16px; }
.taskwin { width: 152px; height: 40px; box-sizing: border-box; display: flex; align-items: center; gap: 6px; padding: 2px 0 0 7px; white-space: nowrap; flex: none; border-bottom: 2px solid #76b9ed; }
.taskwin.active { width: 160px; background: #3d3d3d; padding-left: 11px; gap: 3px; }
.tw-first { margin-left: 7px; margin-right: 8px; }
.tw-explorer { padding-left: 10px; gap: 10px; }
.tw-folder { width: 14px; height: 20px; }
.taskapp { width: 49px; display: flex; align-items: center; justify-content: center; flex: none; }
.tw-obs { width: 58px; }
.tw-ts { margin-left: 4px; }
.wordmark { fill: #fff; font: 700 13px 'Liberation Sans', sans-serif; }

.tray { margin-left: auto; display: flex; align-items: center; width: 258px; }
.t-people { width: 18px; height: 18px; margin: 0 9px; }
.t-chev { width: 14px; height: 8px; margin: 0 5px 0 11px; }
.t-shield { width: 16px; height: 16px; margin: 0 4px 0 5px; }
.t-vol { width: 16px; height: 14px; margin: 0 3px 0 4px; }
.t-net { width: 16px; height: 14px; margin: 0 2px 0 7px; }
.clock { width: 64px; display: flex; flex-direction: column; align-items: center; line-height: 17px; white-space: nowrap; }
.notif { width: 44px; height: 40px; display: flex; align-items: center; justify-content: center; position: relative; }
.notif svg { width: 16px; height: 14px; }
.badge { position: absolute; left: 21px; top: 17px; width: 16px; height: 16px; border-radius: 50%; background: #3c3c3c; border: 1px solid #999; box-sizing: border-box; text-align: center; line-height: 14px; font-size: 11px; }
.showdesk { width: 1px; height: 40px; margin-left: 11px; background: #666; }

/* editor window */
.notepad {
	position: absolute; left: 241px; top: 234px; width: 1426px; height: 751px;
	box-sizing: border-box; background: #fff; border: 1px solid #5aa2ea;
	box-shadow: 0 6px 26px rgba(0,0,0,0.38);
	display: flex; flex-direction: column; color: #111;
}
.np-title { height: 30px; display: flex; align-items: center; padding-left: 9px; gap: 4px; flex: none; letter-spacing: 0; }
.np-btns { margin-left: auto; margin-bottom: 2px; display: flex; gap: 33px; padding-right: 17px; }
.np-btns svg { width: 12px; height: 12px; }
.np-menu { height: 20px; flex: none; display: flex; align-items: center; gap: 14px; padding-left: 7px; border-bottom: 1px solid #f0f0f0; box-sizing: border-box; }
.np-body { flex: 1; display: flex; min-height: 0; }
.np-text { flex: 1; margin: 0; padding: 1px 0 0 4px; font: 13.33px/18px 'Liberation Mono', monospace; letter-spacing: 0; color: #111; }
.vscroll { width: 16px; background: #f0f0f0; display: flex; flex-direction: column; justify-content: space-between; align-items: center; padding: 7px 0 5px; box-sizing: border-box; }
.vscroll svg { width: 9px; height: 5px; }
.hscroll { height: 15px; flex: none; background: #f0f0f0; display: flex; align-items: center; padding-left: 6px; position: relative; }
.hscroll svg { width: 5px; height: 9px; }
.hscroll svg:nth-child(2) { margin-left: auto; margin-right: 22px; }
.hscroll .grip { width: 8px; height: 8px; position: absolute; right: 3px; bottom: 1px; }
```
